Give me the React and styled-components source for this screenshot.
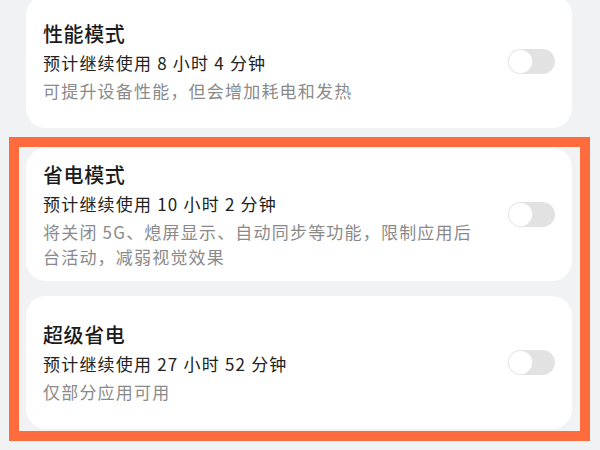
import React from "react";
import styled, { createGlobalStyle } from "styled-components";

const GlobalStyle = createGlobalStyle`
  html, body {
    margin: 0;
    padding: 0;
    background: #f1f2f4;
  }
  body {
    font-family: "Noto Sans CJK SC", "Noto Sans", sans-serif;
    overflow: hidden;
  }
`;

const Page = styled.div`
  width: 600px;
  height: 450px;
  overflow: hidden;
  padding: 0 28px 0 26px;
  box-sizing: border-box;
`;

const List = styled.div`
  display: flex;
  flex-direction: column;
  gap: 15px;
  margin-top: -5px;
`;

const Highlight = styled.div`
  display: flex;
  flex-direction: column;
  gap: 15px;
  margin: -6px -18px 0 -17px;
  padding: 1px 8px 2px 7px;
  border: 10px solid #fe6c3e;
`;

const Card = styled.div`
  display: flex;
  align-items: center;
  min-height: 133px;
  box-sizing: border-box;
  padding: 12px 17px;
  background: #fff;
  border-radius: 20px;
`;

const Text = styled.div`
  flex: 1;
  display: flex;
  flex-direction: column;
  padding-right: 20px;
`;

const Title = styled.div`
  font-size: 20px;
  line-height: 28px;
  font-weight: 500;
  letter-spacing: 0.6px;
  color: #1b1b1b;
  margin-bottom: 2px;
`;

const Usage = styled.div`
  font-size: 17px;
  line-height: 26px;
  letter-spacing: 1.2px;
  color: #222;
`;

const Desc = styled.div`
  font-size: 17px;
  line-height: 25px;
  letter-spacing: 1.2px;
  color: #8a8a8a;
  margin-top: 2px;
`;

const Track = styled.div`
  flex-shrink: 0;
  width: 47px;
  height: 25px;
  border-radius: 13px;
  background: ${(p) => (p.on ? "#3a7bf5" : "#e2e2e2")};
  display: flex;
  align-items: center;
  justify-content: ${(p) => (p.on ? "flex-end" : "flex-start")};
  padding: 1px;
  box-sizing: border-box;
`;

const Knob = styled.div`
  width: 23px;
  height: 23px;
  border-radius: 50%;
  background: #fff;
  box-shadow: 0 0 0 1px #e6e6e6;
`;

const modes = [
  {
    title: "性能模式",
    usage: "预计继续使用 8 小时 4 分钟",
    desc: "可提升设备性能，但会增加耗电和发热",
  },
  {
    title: "省电模式",
    usage: "预计继续使用 10 小时 2 分钟",
    desc: "将关闭 5G、熄屏显示、自动同步等功能，限制应用后台活动，减弱视觉效果",
  },
  {
    title: "超级省电",
    usage: "预计继续使用 27 小时 52 分钟",
    desc: "仅部分应用可用",
  },
];

const ModeCard = ({ mode }) => (
  <Card>
    <Text>
      <Title>{mode.title}</Title>
      <Usage>{mode.usage}</Usage>
      <Desc>{mode.desc}</Desc>
    </Text>
    <Track>
      <Knob />
    </Track>
  </Card>
);

const App = () => {
  return (
    <Page>
      <GlobalStyle />
      <List>
        <ModeCard mode={modes[0]} />
        <Highlight>
          <ModeCard mode={modes[1]} />
          <ModeCard mode={modes[2]} />
        </Highlight>
      </List>
    </Page>
  );
};

export default App;
